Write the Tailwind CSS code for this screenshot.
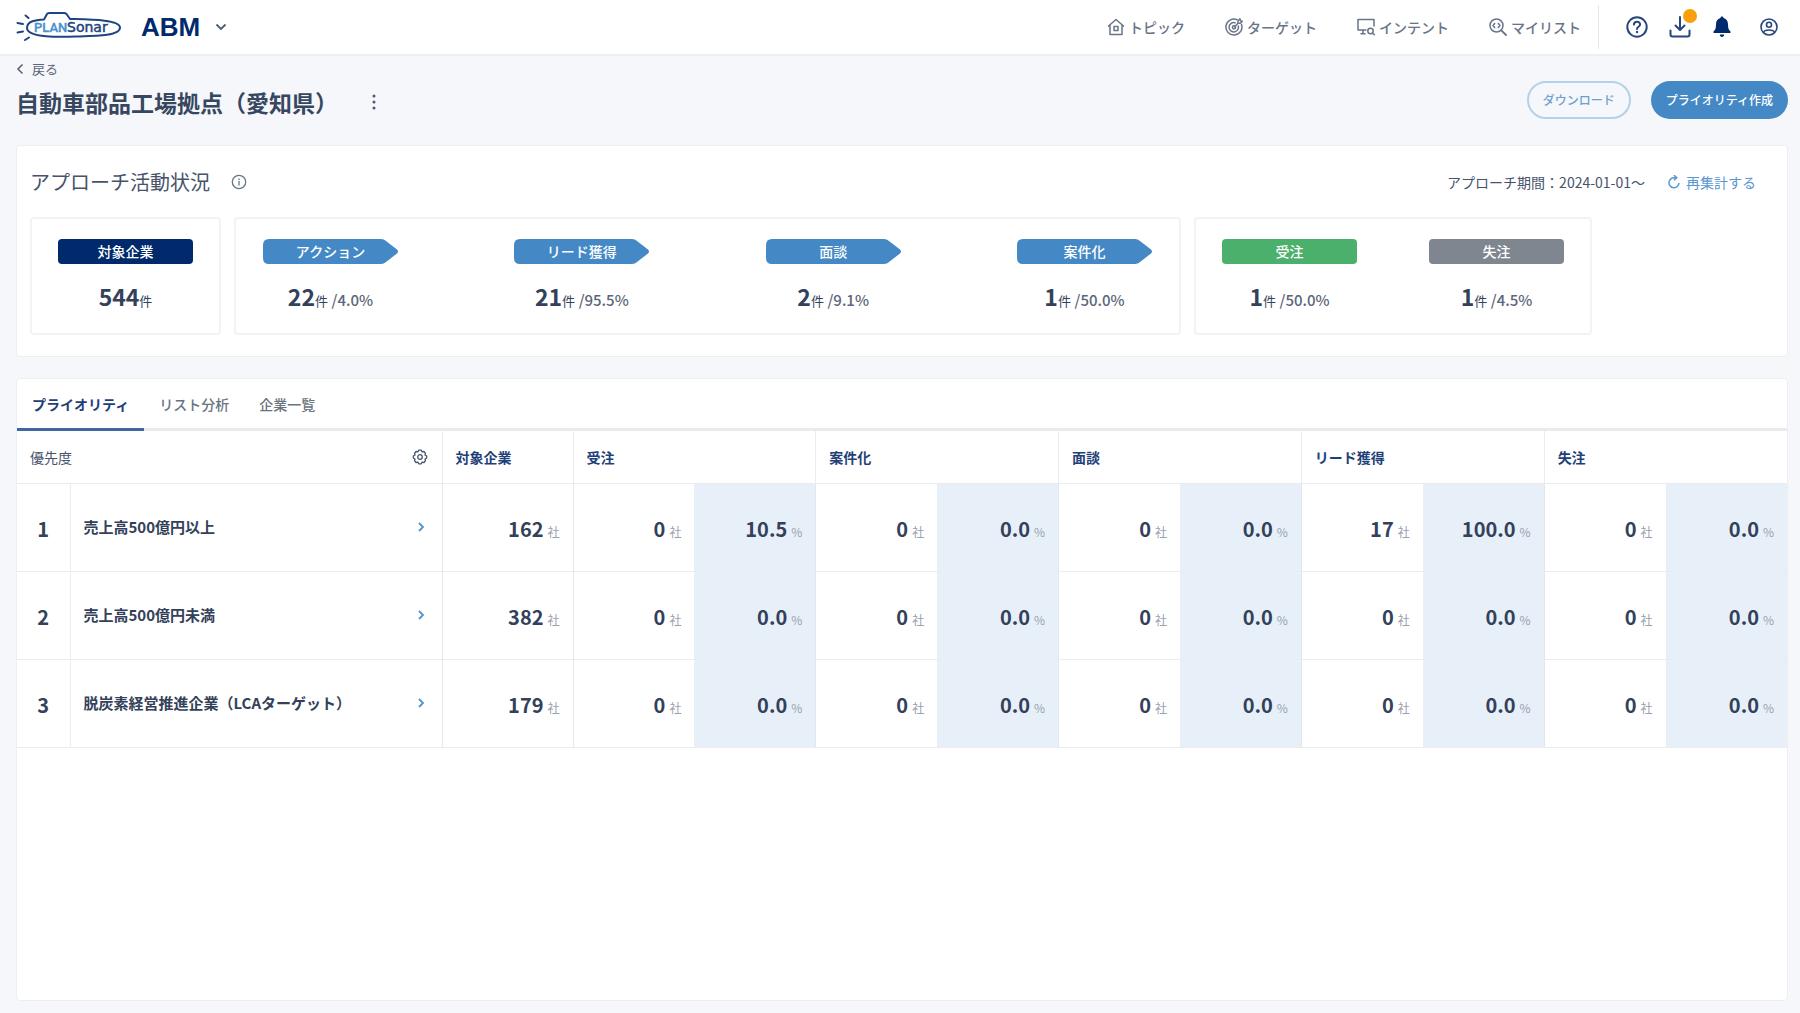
<!DOCTYPE html>
<html lang="ja">
<head>
  <meta charset="UTF-8" />
  <meta name="viewport" content="width=device-width, initial-scale=1.0" />
  <title>PLANSonar ABM</title>
  <script src="https://cdn.jsdelivr.net/npm/@tailwindcss/browser@4"></script>
</head>
<body class="min-h-screen flex flex-col bg-[#f5f7fa] text-[#33415a] font-['Noto_Sans_CJK_JP',sans-serif]">

  <header class="h-14 shrink-0 flex items-center justify-between bg-white border-b-2 border-[#eeeff1] pl-4 pr-[21px]">
    <div class="flex items-center">
      <a href="#" aria-label="PLANSonar" class="mr-[19px]">
        <svg class="w-[106px] h-8" viewBox="0 0 106 32" fill="none" stroke="#1f4480" stroke-width="2" stroke-linecap="round" stroke-linejoin="round">
          <path d="M28 8.500L31 3Q31.500 2 33 2H48Q49.500 2 50.500 3L54 8C72 8.500 104 8.500 104 16.500C104 25 80 25 60 25.500C45 26 11 27 11 17C11 10 20 9 28 8.500Z" />
          <path d="M9.500 4.500L12.500 7M1.500 12L7 13M1.500 21.500L7 20.500M9 29L13 26.500" />
          <text x="18" y="21" font-family="Roboto" font-size="13" font-weight="500" fill="#4a8fd0" stroke="#4a8fd0" stroke-width=".3">PLAN</text>
          <text x="51" y="21" font-family="DejaVu Sans" font-size="14" fill="#1f4480" stroke="#1f4480" stroke-width=".5">Sonar</text>
        </svg>
      </a>
      <button type="button" class="flex items-center gap-[15px] text-[#002a6b]">
        <span class="font-['Liberation_Sans',sans-serif] font-bold text-[26px] leading-8">ABM</span>
        <svg class="size-3 text-[#4b5b73]" viewBox="0 0 12 12" fill="none" stroke="currentColor" stroke-width="1.800"><path d="M1.500 3.500L6 8L10.500 3.500" /></svg>
      </button>
    </div>

    <div class="flex items-center">
      <nav class="flex items-center gap-10 text-sm font-medium text-[#6a7489]">
        <a href="#" class="flex items-center gap-1">
          <svg class="size-[18px]" viewBox="0 0 18 18" fill="none" stroke="currentColor" stroke-width="1.500" stroke-linejoin="round"><path d="M1 8.500L9 1.500L17 8.500M3 7V16.500H15V7" /><rect x="7" y="8.500" width="4" height="4" /></svg>
          トピック
        </a>
        <a href="#" class="flex items-center gap-1">
          <svg class="size-[18px]" viewBox="0 0 18 18" fill="none" stroke="currentColor" stroke-width="1.500" stroke-linecap="round" stroke-linejoin="round"><path d="M12 1.700A8 8 0 1 0 16.500 6.500M10 4.700A4.700 4.700 0 1 0 13.300 8" /><circle cx="9" cy="9.300" r="1.600" /><path d="M9.500 8.800L13 5.200M13 5.200V2.800L15 .8L15.400 2.800L17.300 3.300L15.300 5.200Z" /></svg>
          ターゲット
        </a>
        <a href="#" class="flex items-center gap-1">
          <svg class="size-[18px]" viewBox="0 0 18 18" fill="none" stroke="currentColor" stroke-width="1.500" stroke-linecap="round" stroke-linejoin="round"><path d="M17 8V1.500H1V12H9M6 12V15.500M4 15.700H8" /><circle cx="13.500" cy="13" r="2.700" /><path d="M15.500 15L17.300 16.800" /></svg>
          インテント
        </a>
        <a href="#" class="flex items-center gap-1">
          <svg class="size-[18px]" viewBox="0 0 18 18" fill="none" stroke="currentColor" stroke-width="1.500" stroke-linecap="round" stroke-linejoin="round"><circle cx="7.500" cy="7.500" r="6.500" /><path d="M12.300 12.300L17 17" stroke-width="1.800" /><path d="M5.700 5.500L4 7.500L5.700 9.500M9.300 5.500L11 7.500L9.300 9.500" /></svg>
          マイリスト
        </a>
      </nav>
      <div class="w-px h-11 ml-[17px] mr-[27px] bg-[#e6e9ee]"></div>
      <div class="flex items-center text-[#27467c]">
        <button type="button" aria-label="ヘルプ" class="mr-[21px]">
          <svg class="size-[22px]" viewBox="0 0 22 22" fill="none" stroke="currentColor" stroke-width="2" stroke-linecap="round"><circle cx="11" cy="11" r="9.700" /><path d="M7.900 8.600C8 4.700 14.300 4.800 14.100 8.500C14 10.800 11 10.700 11 13" /><circle cx="11" cy="16" r="1.200" fill="currentColor" stroke="none" /></svg>
        </button>
        <button type="button" aria-label="ダウンロード履歴" class="relative mr-[22px]">
          <svg class="size-[22px]" viewBox="0 0 22 22" fill="none" stroke="currentColor" stroke-width="2" stroke-linecap="round" stroke-linejoin="round"><path d="M11 1V13.500M6.500 9.500L11 14L15.500 9.500M1.500 14.500V18.500Q1.500 20.500 3.500 20.500H18.500Q20.500 20.500 20.500 18.500V14.500" /></svg>
          <span class="absolute -top-[7px] -right-[6px] size-[14px] rounded-full bg-[#f99f0b]"></span>
        </button>
        <button type="button" aria-label="お知らせ" class="mr-7 text-[#002a6b]">
          <svg class="w-[18px] h-[22px]" viewBox="0 0 18 22" fill="currentColor"><path d="M9 .5C9.900 .5 10.500 1.100 10.600 2C13.800 2.800 15 5.500 15 8.500C15 12.500 15.800 14 17.500 15.500V17H.5V15.500C2.200 14 3 12.500 3 8.500C3 5.500 4.200 2.800 7.400 2C7.500 1.100 8.100 .5 9 .5ZM6.800 18.500H11.200C11.200 20 10.200 21 9 21S6.800 20 6.800 18.500Z" /></svg>
        </button>
        <button type="button" aria-label="アカウント">
          <svg class="size-5" viewBox="0 0 20 20" fill="none" stroke="currentColor" stroke-width="1.600"><circle cx="10" cy="10" r="8" /><circle cx="10" cy="7.700" r="2.500" /><path d="M4.500 15.500C5.500 12.200 14.500 12.200 15.500 15.500" /></svg>
        </button>
      </div>
    </div>
  </header>

  <main class="flex-1 flex flex-col pl-4 pr-3 pb-3">
    <div class="flex justify-between items-start pb-[25px]">
      <div>
        <a href="#" class="flex items-center gap-2 mt-[3px] text-[13px] leading-5 text-[#5b6679]">
          <svg class="w-2 h-3" viewBox="0 0 8 12" fill="none" stroke="currentColor" stroke-width="1.600"><path d="M6.500 1.500L2 6L6.500 10.500" /></svg>
          戻る
        </a>
        <div class="flex items-center gap-[26px] mt-[5px]">
          <h1 class="text-[23px] leading-9 font-bold text-[#37475f]">自動車部品工場拠点（愛知県）</h1>
          <button type="button" aria-label="メニュー" class="w-5 h-6 flex items-center justify-center">
            <svg class="w-1 h-4" viewBox="0 0 4 16" fill="#4b5b73"><circle cx="2" cy="2" r="1.500" /><circle cx="2" cy="8" r="1.500" /><circle cx="2" cy="14" r="1.500" /></svg>
          </button>
        </div>
      </div>
      <div class="flex gap-5 mt-[25px] text-xs font-medium">
        <button type="button" class="h-[38px] px-[14px] rounded-full border-2 border-[#b3d1ea] text-[#6f9fd0]">ダウンロード</button>
        <button type="button" class="h-[38px] px-[15px] rounded-full bg-[#4489c6] text-white">プライオリティ作成</button>
      </div>
    </div>

    <section class="bg-white border border-[#eceef2] rounded-sm pl-[13px] pr-[31px] pt-[22px] pb-[21px]">
      <div class="flex items-center justify-between h-7">
        <div class="flex items-center gap-[21px]">
          <h2 class="text-xl text-[#46536b]">アプローチ活動状況</h2>
          <svg class="size-4 text-[#6a7489]" viewBox="0 0 16 16" fill="none" stroke="currentColor" stroke-width="1.300"><circle cx="8" cy="8" r="6.700" /><path d="M8 7V11.500M8 4.500V6" /></svg>
        </div>
        <div class="flex items-center gap-[22px] text-sm">
          <span class="text-[#46536b]">アプローチ期間：2024-01-01～</span>
          <button type="button" class="flex items-center gap-[5px] text-[#5a96d2]">
            <svg class="size-[14px]" viewBox="0 0 14 14" fill="none" stroke="currentColor" stroke-width="1.500"><path d="M7.500 2.700A5 5 0 1 0 12 8M7.500 2.700H10M7 .2L9.800 2.700L7 5.200" /></svg>
            再集計する
          </button>
        </div>
      </div>

      <div class="flex gap-[13px] mt-[21px] text-center">
        <div class="w-[191px] h-[118px] pt-5 flex justify-center border-2 border-[#f2f3f5] rounded">
          <div class="w-[135px]">
            <div class="h-[25px] leading-[25px] rounded bg-[#002a6b] text-white text-sm font-medium">対象企業</div>
            <p class="mt-[14px] leading-9"><span class="text-[23px] font-bold">544</span><span class="text-[13px]">件</span></p>
          </div>
        </div>

        <div class="flex-1 max-w-[947px] h-[118px] pt-5 px-[27px] flex justify-between border-2 border-[#f2f3f5] rounded">
          <div class="w-[135px]">
            <div class="relative h-[25px] leading-[25px] text-white text-sm font-medium">
              <svg class="absolute inset-0 size-full" viewBox="0 0 135 25" fill="#4489c6"><path d="M6 0H118Q121 0 123 2L134 10.500Q136 12.500 134 14.500L123 23Q121 25 118 25H6Q0 25 0 19V6Q0 0 6 0Z" /></svg>
              <span class="relative">アクション</span>
            </div>
            <p class="mt-[14px] leading-9"><span class="text-[23px] font-bold">22</span><span class="text-[13px]">件</span> <span class="text-[15px] font-medium text-[#5b6679]">/4.0%</span></p>
          </div>
          <div class="w-[135px]">
            <div class="relative h-[25px] leading-[25px] text-white text-sm font-medium">
              <svg class="absolute inset-0 size-full" viewBox="0 0 135 25" fill="#4489c6"><path d="M6 0H118Q121 0 123 2L134 10.500Q136 12.500 134 14.500L123 23Q121 25 118 25H6Q0 25 0 19V6Q0 0 6 0Z" /></svg>
              <span class="relative">リード獲得</span>
            </div>
            <p class="mt-[14px] leading-9"><span class="text-[23px] font-bold">21</span><span class="text-[13px]">件</span> <span class="text-[15px] font-medium text-[#5b6679]">/95.5%</span></p>
          </div>
          <div class="w-[135px]">
            <div class="relative h-[25px] leading-[25px] text-white text-sm font-medium">
              <svg class="absolute inset-0 size-full" viewBox="0 0 135 25" fill="#4489c6"><path d="M6 0H118Q121 0 123 2L134 10.500Q136 12.500 134 14.500L123 23Q121 25 118 25H6Q0 25 0 19V6Q0 0 6 0Z" /></svg>
              <span class="relative">面談</span>
            </div>
            <p class="mt-[14px] leading-9"><span class="text-[23px] font-bold">2</span><span class="text-[13px]">件</span> <span class="text-[15px] font-medium text-[#5b6679]">/9.1%</span></p>
          </div>
          <div class="w-[135px]">
            <div class="relative h-[25px] leading-[25px] text-white text-sm font-medium">
              <svg class="absolute inset-0 size-full" viewBox="0 0 135 25" fill="#4489c6"><path d="M6 0H118Q121 0 123 2L134 10.500Q136 12.500 134 14.500L123 23Q121 25 118 25H6Q0 25 0 19V6Q0 0 6 0Z" /></svg>
              <span class="relative">案件化</span>
            </div>
            <p class="mt-[14px] leading-9"><span class="text-[23px] font-bold">1</span><span class="text-[13px]">件</span> <span class="text-[15px] font-medium text-[#5b6679]">/50.0%</span></p>
          </div>
        </div>

        <div class="w-[398px] h-[118px] pt-5 px-[26px] flex justify-between border-2 border-[#f2f3f5] rounded">
          <div class="w-[135px]">
            <div class="h-[25px] leading-[25px] rounded bg-[#4bb06b] text-white text-sm font-medium">受注</div>
            <p class="mt-[14px] leading-9"><span class="text-[23px] font-bold">1</span><span class="text-[13px]">件</span> <span class="text-[15px] font-medium text-[#5b6679]">/50.0%</span></p>
          </div>
          <div class="w-[135px]">
            <div class="h-[25px] leading-[25px] rounded bg-[#80868f] text-white text-sm font-medium">失注</div>
            <p class="mt-[14px] leading-9"><span class="text-[23px] font-bold">1</span><span class="text-[13px]">件</span> <span class="text-[15px] font-medium text-[#5b6679]">/4.5%</span></p>
          </div>
        </div>
      </div>
    </section>

    <section class="flex-1 mt-[21px] bg-white border border-[#eceef2] rounded-sm">
      <div role="tablist" class="flex h-[52px] border-b-3 border-[#e8eaee] text-sm font-medium text-[#6a7480]">
        <button type="button" role="tab" aria-selected="true" class="h-[52px] px-[15px] border-b-3 border-[#3f66a0] font-bold text-[#1f3f78]">プライオリティ</button>
        <button type="button" role="tab" aria-selected="false" class="px-[15px]">リスト分析</button>
        <button type="button" role="tab" aria-selected="false" class="px-[15px]">企業一覧</button>
      </div>

      <table class="w-full table-fixed border-collapse text-left">
        <colgroup>
          <col class="w-[53px]" /><col class="w-[372px]" /><col class="w-[131px]" />
          <col /><col /><col /><col /><col /><col /><col /><col /><col /><col />
        </colgroup>
        <thead class="text-sm text-[#1f3f78]">
          <tr class="h-[52px] border-b border-[#e9ecf0]">
            <th colspan="2" class="pl-[13px] pr-[14px] font-normal text-[#46536b]">
              <div class="flex items-center justify-between">
                優先度
                <button type="button" aria-label="優先度の設定">
                  <svg class="size-4" viewBox="0 0 16 16" fill="none" stroke="currentColor" stroke-width="1.300" stroke-linejoin="round"><path d="M6.700 1.200H9.300L10 2.800L12 2.500L13.500 4.300L13 6L14.700 7V9L13 10L13.500 11.700L12 13.500L10 13.200L9.300 14.800H6.700L6 13.200L4 13.500L2.500 11.700L3 10L1.300 9V7L3 6L2.500 4.300L4 2.500L6 2.800Z" /><circle cx="8" cy="8" r="2.300" /></svg>
                </button>
              </div>
            </th>
            <th class="pl-[13px] border-l border-[#e9ecf0]">対象企業</th>
            <th colspan="2" class="pl-[13px] border-l border-[#e9ecf0]">受注</th>
            <th colspan="2" class="pl-[13px] border-l border-[#e9ecf0]">案件化</th>
            <th colspan="2" class="pl-[13px] border-l border-[#e9ecf0]">面談</th>
            <th colspan="2" class="pl-[13px] border-l border-[#e9ecf0]">リード獲得</th>
            <th colspan="2" class="pl-[13px] border-l border-[#e9ecf0]">失注</th>
          </tr>
        </thead>
        <tbody id="priorityRows"></tbody>
      </table>
    </section>
  </main>

  <script>
    // stages: [count, rate] for 受注, 案件化, 面談, リード獲得, 失注
    const priorities = [
      { name: '売上高500億円以上', companies: 162, stages: [[0, '10.5'], [0, '0.0'], [0, '0.0'], [17, '100.0'], [0, '0.0']] },
      { name: '売上高500億円未満', companies: 382, stages: [[0, '0.0'], [0, '0.0'], [0, '0.0'], [0, '0.0'], [0, '0.0']] },
      { name: '脱炭素経営推進企業（LCAターゲット）', companies: 179, stages: [[0, '0.0'], [0, '0.0'], [0, '0.0'], [0, '0.0'], [0, '0.0']] },
    ];

    function valueCell(value, unit, classes) {
      return `<td class="pt-1 pr-[13px] text-right border-[#e3e8ee] ${classes}">
        <span class="text-xl font-bold">${value}</span><span class="ml-1 text-xs text-[#99a1ad]">${unit}</span>
      </td>`;
    }

    document.getElementById('priorityRows').innerHTML = priorities.map((p, i) => `
      <tr class="h-22 border-b border-[#e9ecf0]">
        <td class="pt-1 text-center text-xl font-bold">${i + 1}</td>
        <td class="pl-[13px] pr-[17px] border-l border-[#e9ecf0]">
          <a href="#" class="flex items-center justify-between text-[15px] font-bold">
            ${p.name}
            <svg class="w-2 h-3 text-[#4f93d6]" viewBox="0 0 8 12" fill="none" stroke="currentColor" stroke-width="1.800"><path d="M2 2L6 6L2 10" /></svg>
          </a>
        </td>
        ${valueCell(p.companies, '社', 'border-l')}
        ${p.stages.map(([count, rate]) => valueCell(count, '社', 'border-l') + valueCell(rate, '%', 'bg-[#e7f0f9]')).join('')}
      </tr>`).join('');
  </script>
</body>
</html>
